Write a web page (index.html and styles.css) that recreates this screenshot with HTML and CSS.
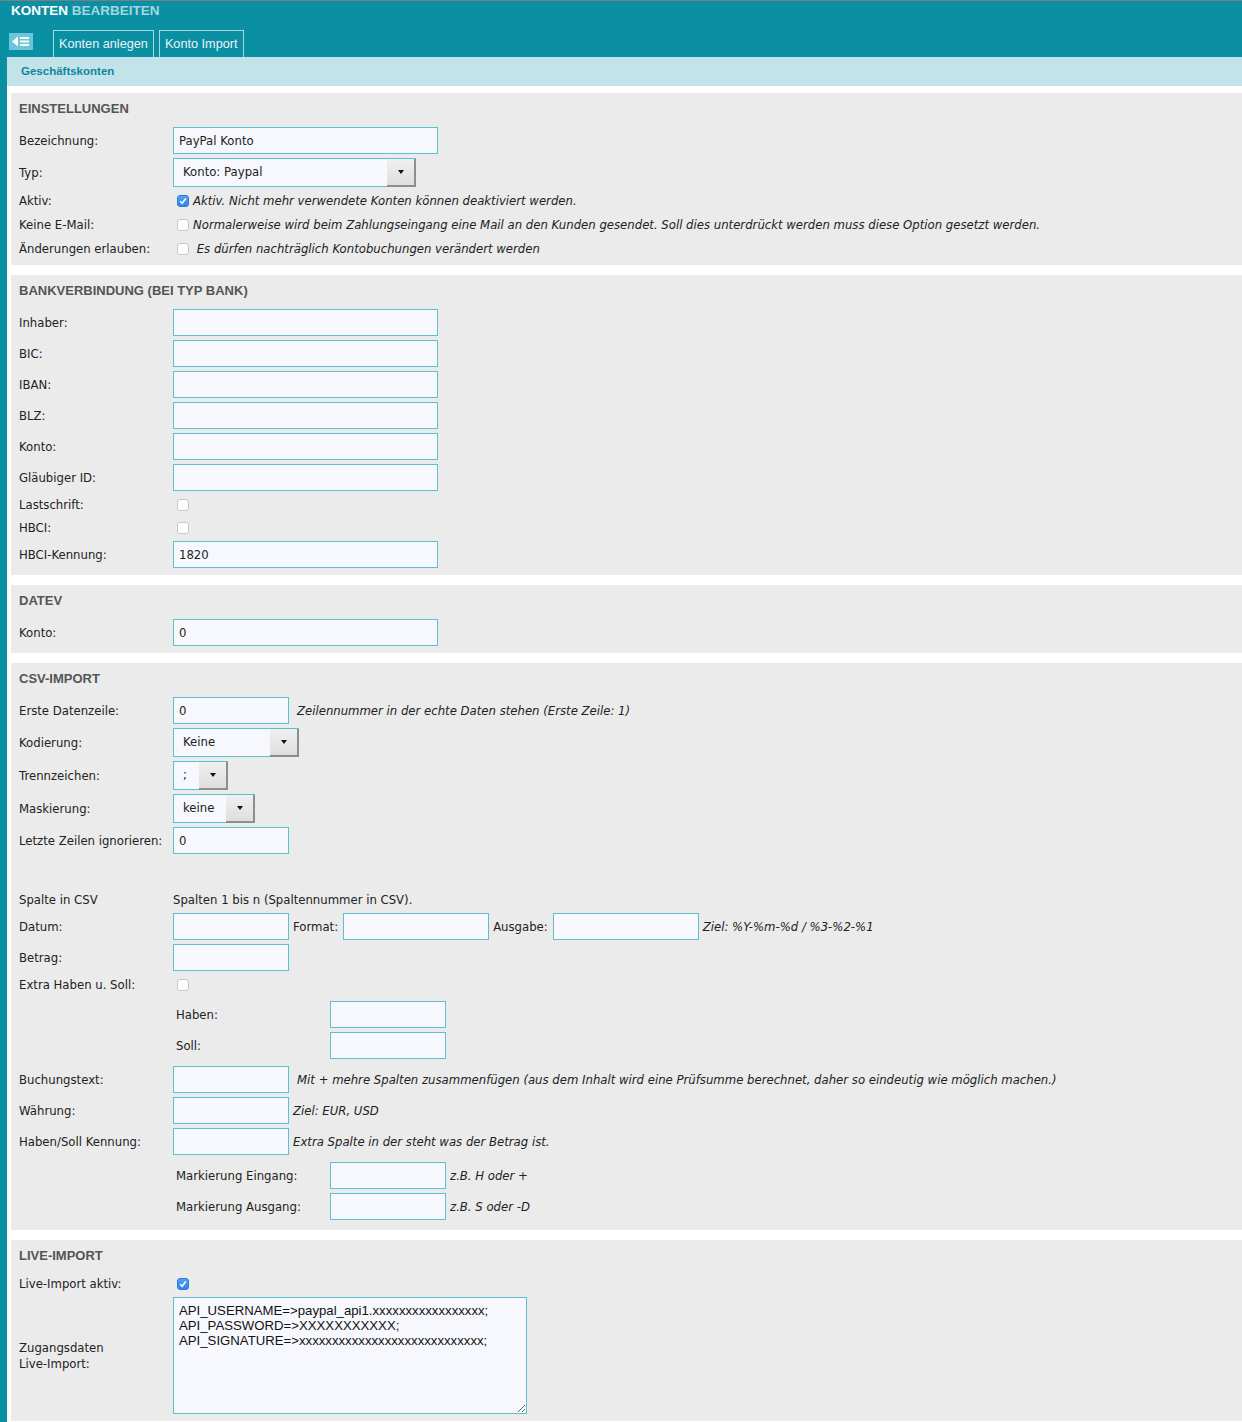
FILE: index.html
```html
<!DOCTYPE html>
<html lang="de">
<head>
  <meta charset="UTF-8">
  <title>Konten bearbeiten</title>
  <link rel="stylesheet" href="styles.css">
</head>
<body>
  <div class="topbar">
    <div class="title">KONTEN <span>BEARBEITEN</span></div>
    <div class="nav">
      <svg class="menu-btn" width="24" height="17" viewBox="0 0 24 17">
        <rect width="24" height="17" fill="#6ac7d9"/>
        <path d="M3 8.5 L9 3.5 L9 13.5 Z" fill="#fff"/>
        <rect x="11" y="4" width="9" height="2" fill="#fff"/>
        <rect x="11" y="7.5" width="9" height="2" fill="#fff"/>
        <rect x="11" y="11" width="9" height="2" fill="#fff"/>
      </svg>
      <a class="tab">Konten anlegen</a>
      <a class="tab">Konto Import</a>
    </div>
  </div>

  <div class="page">
    <div class="subbar">Geschäftskonten</div>

    <div class="content">
      <!-- Einstellungen -->
      <div class="section">
        <h2>Einstellungen</h2>
        <div class="row">
          <label class="lbl">Bezeichnung:</label>
          <input class="inp w-l" type="text" value="PayPal Konto">
        </div>
        <div class="row">
          <label class="lbl">Typ:</label>
          <span class="select w-typ"><span class="val">Konto: Paypal</span><span class="arrow"></span></span>
        </div>
        <div class="row tall">
          <label class="lbl">Aktiv:</label>
          <span class="chk checked"><svg width="8" height="8" viewBox="0 0 8 8"><path d="M1.2 4.2 L3.2 6.2 L6.8 1.6" fill="none" stroke="#fff" stroke-width="1.6"/></svg></span>
          <span class="hint">Aktiv. Nicht mehr verwendete Konten können deaktiviert werden.</span>
        </div>
        <div class="row tall">
          <label class="lbl">Keine E-Mail:</label>
          <span class="chk"></span>
          <span class="hint">Normalerweise wird beim Zahlungseingang eine Mail an den Kunden gesendet. Soll dies unterdrückt werden muss diese Option gesetzt werden.</span>
        </div>
        <div class="row">
          <label class="lbl">Änderungen erlauben:</label>
          <span class="chk"></span>
          <span class="hint">&nbsp;Es dürfen nachträglich Kontobuchungen verändert werden</span>
        </div>
      </div>

      <!-- Bankverbindung -->
      <div class="section">
        <h2>Bankverbindung (bei Typ Bank)</h2>
        <div class="row"><label class="lbl">Inhaber:</label><input class="inp w-l" type="text"></div>
        <div class="row"><label class="lbl">BIC:</label><input class="inp w-l" type="text"></div>
        <div class="row"><label class="lbl">IBAN:</label><input class="inp w-l" type="text"></div>
        <div class="row"><label class="lbl">BLZ:</label><input class="inp w-l" type="text"></div>
        <div class="row"><label class="lbl">Konto:</label><input class="inp w-l" type="text"></div>
        <div class="row"><label class="lbl">Gläubiger ID:</label><input class="inp w-l" type="text"></div>
        <div class="row"><label class="lbl">Lastschrift:</label><span class="chk"></span></div>
        <div class="row"><label class="lbl">HBCI:</label><span class="chk"></span></div>
        <div class="row"><label class="lbl">HBCI-Kennung:</label><input class="inp w-l" type="text" value="1820"></div>
      </div>

      <!-- Datev -->
      <div class="section">
        <h2>Datev</h2>
        <div class="row"><label class="lbl">Konto:</label><input class="inp w-l" type="text" value="0"></div>
      </div>

      <!-- CSV Import -->
      <div class="section">
        <h2>CSV-Import</h2>
        <div class="row">
          <label class="lbl">Erste Datenzeile:</label>
          <input class="inp w-s" type="text" value="0">
          <span class="hint gap-l">Zeilennummer in der echte Daten stehen (Erste Zeile: 1)</span>
        </div>
        <div class="row">
          <label class="lbl">Kodierung:</label>
          <span class="select w-kod"><span class="val">Keine</span><span class="arrow"></span></span>
        </div>
        <div class="row">
          <label class="lbl">Trennzeichen:</label>
          <span class="select w-tr"><span class="val">;</span><span class="arrow"></span></span>
        </div>
        <div class="row">
          <label class="lbl">Maskierung:</label>
          <span class="select w-mask"><span class="val">keine</span><span class="arrow"></span></span>
        </div>
        <div class="row">
          <label class="lbl">Letzte Zeilen ignorieren:</label>
          <input class="inp w-s" type="text" value="0">
        </div>

        <div class="spacer"></div>

        <div class="row">
          <label class="lbl">Spalte in CSV</label>
          <span>Spalten 1 bis n (Spaltennummer in CSV).</span>
        </div>
        <div class="row">
          <label class="lbl">Datum:</label>
          <input class="inp w-s" type="text">
          <span class="inline">Format:</span>
          <input class="inp w-fmt" type="text">
          <span class="inline">Ausgabe:</span>
          <input class="inp w-fmt" type="text">
          <span class="hint gap">Ziel: %Y-%m-%d / %3-%2-%1</span>
        </div>
        <div class="row">
          <label class="lbl">Betrag:</label>
          <input class="inp w-s" type="text">
        </div>
        <div class="row">
          <label class="lbl">Extra Haben u. Soll:</label>
          <span class="chk"></span>
        </div>
        <div class="sub">
          <div class="row"><label class="lbl">Haben:</label><input class="inp w-s" type="text"></div>
          <div class="row last"><label class="lbl">Soll:</label><input class="inp w-s" type="text"></div>
        </div>
        <div class="row">
          <label class="lbl">Buchungstext:</label>
          <input class="inp w-s" type="text">
          <span class="hint gap-l">Mit + mehre Spalten zusammenfügen (aus dem Inhalt wird eine Prüfsumme berechnet, daher so eindeutig wie möglich machen.)</span>
        </div>
        <div class="row">
          <label class="lbl">Währung:</label>
          <input class="inp w-s" type="text">
          <span class="hint gap">Ziel: EUR, USD</span>
        </div>
        <div class="row">
          <label class="lbl">Haben/Soll Kennung:</label>
          <input class="inp w-s" type="text">
          <span class="hint gap">Extra Spalte in der steht was der Betrag ist.</span>
        </div>
        <div class="sub">
          <div class="row"><label class="lbl">Markierung Eingang:</label><input class="inp w-s" type="text"><span class="hint gap">z.B. H oder +</span></div>
          <div class="row last"><label class="lbl">Markierung Ausgang:</label><input class="inp w-s" type="text"><span class="hint gap">z.B. S oder -D</span></div>
        </div>
      </div>

      <!-- Live Import -->
      <div class="section">
        <h2>Live-Import</h2>
        <div class="row">
          <label class="lbl">Live-Import aktiv:</label>
          <span class="chk checked"><svg width="8" height="8" viewBox="0 0 8 8"><path d="M1.2 4.2 L3.2 6.2 L6.8 1.6" fill="none" stroke="#fff" stroke-width="1.6"/></svg></span>
        </div>
        <div class="row">
          <label class="lbl">Zugangsdaten <span class="nowrap">Live-Import:</span></label>
          <textarea class="area">API_USERNAME=&gt;paypal_api1.xxxxxxxxxxxxxxxxx;
API_PASSWORD=&gt;XXXXXXXXXXX;
API_SIGNATURE=&gt;xxxxxxxxxxxxxxxxxxxxxxxxxxxx;</textarea>
        </div>
      </div>
    </div>
  </div>
</body>
</html>
```

FILE: styles.css
```css
body {
  margin: 0;
  font-family: "DejaVu Sans", Verdana, sans-serif;
  font-size: 11.7px;
  color: #222;
  background: #fff;
}

/* header */
.topbar {
  background: #0b8fa3;
  border-top: 1px solid #7d7d7d;
  height: 56px;
}

.title {
  height: 29px;
  padding-left: 11px;
  font: bold 13.5px/20px "Liberation Sans", Arial, sans-serif;
  color: #fff;
}

.title span {
  color: #a3d8e1;
}

.nav {
  display: flex;
  align-items: flex-end;
  height: 27px;
  padding-left: 9px;
}

.menu-btn {
  align-self: flex-start;
  margin: 3px 20px 0 0;
}

.tab {
  box-sizing: border-box;
  height: 27px;
  padding: 0 5px;
  margin-right: 5px;
  border: 1px solid #a5d9e1;
  border-bottom: none;
  color: #e8f5f7;
  font: 12.7px/26px "Liberation Sans", Arial, sans-serif;
}

/* page */
.page {
  border-left: 7px solid #0b8fa3;
}

.subbar {
  height: 29px;
  padding-left: 14px;
  background: #c2e3ea;
  color: #0e879c;
  font: bold 11.5px/29px "Liberation Sans", Arial, sans-serif;
}

.content {
  padding: 7px 0 1px 4px;
}

.section {
  background: #ebebeb;
  padding: 8px 0 3px 8px;
  margin-bottom: 10px;
}

.section h2 {
  margin: 0 0 10px;
  font: bold 13px/16px "Liberation Sans", Arial, sans-serif;
  color: #555;
  text-transform: uppercase;
}

.row {
  display: flex;
  align-items: center;
  min-height: 19px;
  margin-bottom: 4px;
  white-space: nowrap;
}

.row.tall {
  min-height: 20px;
}

.lbl {
  flex: none;
  width: 154px;
  white-space: normal;
  line-height: 16px;
}

.nowrap {
  white-space: nowrap;
}

.inp {
  box-sizing: border-box;
  height: 27px;
  margin: 0;
  padding: 0 5px;
  border: 1px solid #5cc0d0;
  border-radius: 0;
  background: #f7f8fd;
  font: inherit;
  color: #222;
  outline: none;
}

.w-l { width: 265px; }
.w-s { width: 116px; }
.w-fmt { width: 146px; }

.inline {
  margin: 0 5px 0 4px;
}

.hint {
  font-style: italic;
}

.hint.gap { margin-left: 4px; }
.hint.gap-l { margin-left: 8px; }

/* fake select */
.select {
  box-sizing: border-box;
  display: flex;
  height: 29px;
  border: 1px solid #5cc0d0;
  border-right: none;
  background: #f7f8fd;
}

.select .val {
  flex: 1;
  padding-left: 9px;
  line-height: 27px;
}

.select .arrow {
  position: relative;
  width: 27px;
  margin-bottom: -1px;
  background: linear-gradient(#f0f0f0, #dedede);
  border-right: 2px solid #8e8e8e;
  border-bottom: 2px solid #8e8e8e;
}

.select .arrow::after {
  content: "";
  position: absolute;
  left: 11px;
  top: 11px;
  border-left: 3px solid transparent;
  border-right: 3px solid transparent;
  border-top: 4px solid #111;
}

.w-typ { width: 243px; }
.w-kod { width: 126px; }
.w-tr { width: 55px; }
.w-mask { width: 82px; }

/* checkbox */
.chk {
  box-sizing: border-box;
  flex: none;
  width: 12px;
  height: 12px;
  margin: 0 4px;
  border: 1px solid #c9c9c9;
  border-radius: 3px;
  background: #fff;
  display: flex;
  align-items: center;
  justify-content: center;
}

.chk.checked {
  background: linear-gradient(#4ea2f7, #2f85ec);
  border-color: #2c7ad8;
}

.spacer {
  height: 32px;
}

.sub {
  padding: 3px 0 3px 3px;
  margin: 0 0 4px 154px;
}

.sub .row.last {
  margin-bottom: 0;
}

.area {
  box-sizing: border-box;
  width: 354px;
  height: 117px;
  margin: 0;
  padding: 5px 5px;
  border: 1px solid #5cc0d0;
  border-radius: 0;
  background: #f7f8fd;
  font: 13.2px/15px "Liberation Sans", Arial, sans-serif;
  color: #111;
  outline: none;
}
```
